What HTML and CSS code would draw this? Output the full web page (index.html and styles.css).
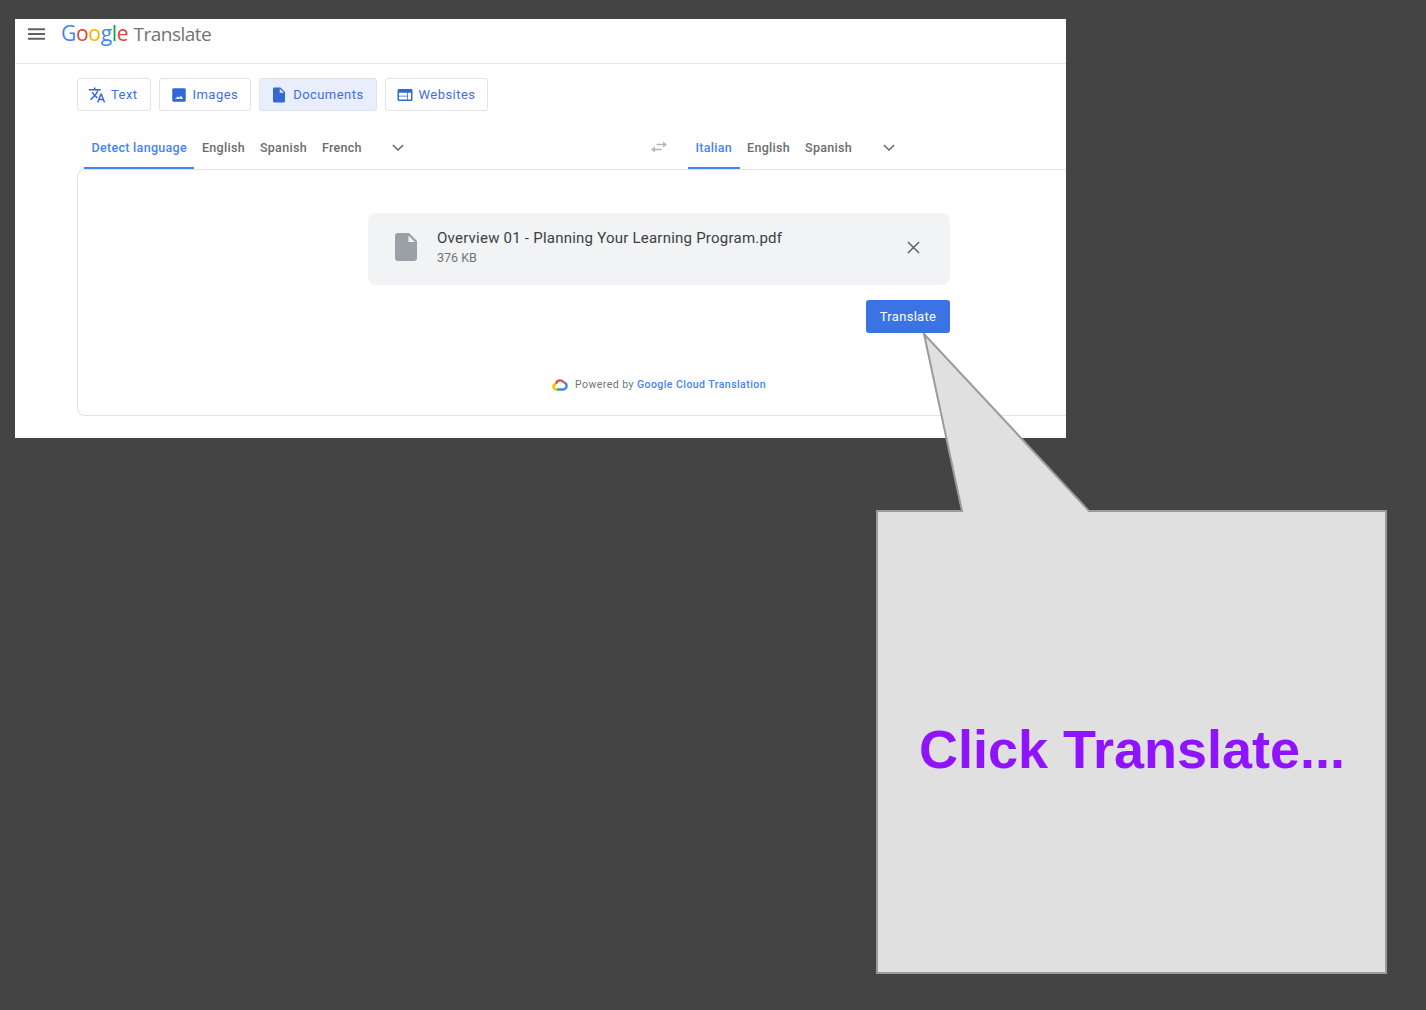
FILE: index.html
```html
<!DOCTYPE html>
<html lang="en">

<head>
    <meta charset="UTF-8">
    <title>Google Translate - Click Translate</title>
    <link rel="stylesheet" href="styles.css">
</head>

<body>
    <div class="panel">
        <div class="topbar">
            <svg class="menu-icon" viewBox="0 0 18 12"><path d="M0 0h18v2H0zM0 5h18v2H0zM0 10h18v2H0z"/></svg>
            <div class="logo">
                <span class="g-blue">G</span><span class="g-red">o</span><span class="g-yellow">o</span><span class="g-blue">g</span><span class="g-green">l</span><span class="g-red">e</span>
                <span class="logo-name">Translate</span>
            </div>
        </div>

        <div class="modes">
            <div class="mode">
                <svg viewBox="0 0 24 24"><path d="M12.87 15.07l-2.54-2.51.03-.03c1.74-1.94 2.98-4.17 3.71-6.53H17V4h-7V2H8v2H1v1.99h11.17C11.5 7.92 10.44 9.75 9 11.35 8.07 10.32 7.3 9.19 6.69 8h-2c.73 1.63 1.73 3.17 2.98 4.56l-5.09 5.02L4 19l5-5 3.11 3.11.76-2.04zM18.5 10h-2L12 22h2l1.12-3h4.75L21 22h2l-4.5-12zm-2.62 7l1.62-4.33L19.12 17h-3.24z"/></svg>
                Text
            </div>
            <div class="mode">
                <svg viewBox="0 0 24 24"><path fill-rule="evenodd" d="M5 3h14c1.100 0 2 .9 2 2v14c0 1.100-.9 2-2 2H5c-1.100 0-2-.9-2-2V5c0-1.100.9-2 2-2zM6.500 17h11l-3-4-2.200 2.600-1.600-1.500z"/></svg>
                Images
            </div>
            <div class="mode mode-on">
                <svg viewBox="0 0 24 24"><path d="M6 2c-1.100 0-1.990.9-1.990 2L4 20c0 1.100.89 2 1.990 2H18c1.100 0 2-.9 2-2V8l-6-6H6zm7 7V3.500L18.500 9H13z"/></svg>
                Documents
            </div>
            <div class="mode">
                <svg viewBox="0 0 24 24"><path d="M20 4H4c-1.100 0-1.990.9-1.990 2L2 18c0 1.100.9 2 2 2h16c1.100 0 2-.9 2-2V6c0-1.100-.9-2-2-2zm-5 14H4v-4h11v4zm0-5H4V9h11v4zm5 5h-4V9h4v9z"/></svg>
                Websites
            </div>
        </div>

        <div class="langs">
            <div class="lang-side lang-source">
                <div class="lang lang-on">Detect language</div>
                <div class="lang">English</div>
                <div class="lang">Spanish</div>
                <div class="lang">French</div>
                <svg class="chevron" viewBox="0 0 14 8"><path d="M1 1l6 6 6-6"/></svg>
            </div>
            <svg class="swap" viewBox="0 0 18 12"><path d="M5 5.500L1 8.500l4 3V9.300h6.500V7.700H5zM13 .5v2.200H6.500v1.600H13v2.200l4-3z"/></svg>
            <div class="lang-side">
                <div class="lang lang-on">Italian</div>
                <div class="lang">English</div>
                <div class="lang">Spanish</div>
                <svg class="chevron" viewBox="0 0 14 8"><path d="M1 1l6 6 6-6"/></svg>
            </div>
        </div>

        <div class="box">
            <div class="column">
                <div class="file">
                    <svg class="file-icon" viewBox="0 0 22 28"><path d="M3 0h11l8 8v17c0 1.700-1.300 3-3 3H3c-1.700 0-3-1.300-3-3V3c0-1.700 1.300-3 3-3zm10.500 2.500V9h6.500z" fill-rule="evenodd"/></svg>
                    <div class="file-text">
                        <div class="file-name">Overview 01 - Planning Your Learning Program.pdf</div>
                        <div class="file-size">376 KB</div>
                    </div>
                    <svg class="close" viewBox="0 0 14 14"><path d="M1 1l12 12M13 1L1 13"/></svg>
                </div>
                <div class="actions">
                    <div class="translate">Translate</div>
                </div>
                <div class="powered">
                    <svg class="cloud" viewBox="0 0 16 12">
                        <path class="c-red" d="M4 5.200C4.300 2.900 6 1.400 8 1.400c1.500 0 2.800.8 3.500 2"/>
                        <path class="c-blue" d="M11.500 3.400c1.800.2 3.100 1.800 3.100 3.500 0 2-1.500 3.600-3.600 3.600H8"/>
                        <path class="c-green" d="M8 10.500H4.500"/>
                        <path class="c-yellow" d="M4.500 10.500C2.700 10.500 1.400 9.200 1.400 7.700 1.400 6.300 2.500 5.200 4 5.200"/>
                    </svg>
                    <span>Powered by</span> <span class="powered-link">Google Cloud Translation</span>
                </div>
            </div>
        </div>
    </div>

    <div class="callout">
        <svg class="callout-shape" viewBox="0 0 512 642"><path d="M48 1L213 178H510V640H1V178H86z"/></svg>
        <div class="callout-text">Click Translate...</div>
    </div>
</body>

</html>
```

FILE: styles.css
```css
body {
    margin: 0;
    height: 1010px;
    overflow: hidden;
    background-color: #444444;
    font-family: Roboto, "Liberation Sans", sans-serif;
    padding: 19px 0 0 15px;
    box-sizing: border-box;
}

.panel {
    width: 1050.5px;
    height: 419px;
    background-color: white;
    overflow: hidden;
}

.topbar {
    display: flex;
    align-items: center;
    height: 45px;
    border-bottom: 1px solid #e6e7e8;
    padding: 0 0 15px 13px;
    box-sizing: border-box;
}

.menu-icon {
    width: 17px;
    height: 12px;
    fill: #5f6368;
    margin-right: 16px;
}

.logo {
    font-family: "Open Sans", sans-serif;
    font-size: 21px;
    font-weight: 500;
    letter-spacing: -0.3px;
    line-height: 30px;
}

.logo-name {
    color: #6f7377;
    font-size: 19px;
    font-weight: 400;
    letter-spacing: -0.5px;
}

.g-blue { color: #4285f4; }
.g-red { color: #db4437; }
.g-yellow { color: #f4b400; }
.g-green { color: #0f9d58; }

.modes {
    display: flex;
    gap: 8px;
    padding: 14px 0 0 62px;
}

.mode {
    display: flex;
    align-items: center;
    height: 33px;
    box-sizing: border-box;
    padding: 0 12px 0 10px;
    gap: 5px;
    border: 1px solid #e1e3e6;
    border-radius: 3px;
    color: #3f70d9;
    font-size: 13px;
    font-weight: 400;
    letter-spacing: 0.45px;
}

.mode svg {
    width: 18px;
    height: 18px;
    fill: #3367d6;
}

.mode-on {
    background-color: #e8eefb;
}

.langs {
    display: flex;
    align-items: center;
    height: 39px;
    margin-top: 19px;
}

.lang-side {
    display: flex;
    align-items: center;
    height: 100%;
}

.lang-source {
    padding-left: 69px;
    box-sizing: border-box;
    flex: 0 0 620px;
}

.lang {
    display: flex;
    align-items: center;
    height: 100%;
    box-sizing: border-box;
    padding: 0 7.5px 5px;
    color: #696d71;
    font-size: 12.5px;
    font-weight: 500;
    letter-spacing: 0.3px;
}

.lang-on {
    color: #4285f4;
    border-bottom: 2px solid #4285f4;
    padding-bottom: 3px;
}

.chevron {
    width: 12px;
    height: 7px;
    margin: 0 0 5px 23px;
    fill: none;
    stroke: #5f6368;
    stroke-width: 1.6;
}

.swap {
    width: 18px;
    height: 12px;
    margin: 0 20px 5px 15px;
    fill: #b4b6b9;
}

.box {
    margin-left: 62px;
    height: 247px;
    box-sizing: border-box;
    border: 1px solid #e3e4e6;
    border-right: 0;
    border-radius: 8px 0 0 8px;
    padding: 43px 0 0 290px;
}

.column {
    width: 582px;
}

.file {
    display: flex;
    align-items: center;
    height: 72px;
    background-color: #f1f3f4;
    border-radius: 8px;
    padding: 0 30px 0 27px;
    box-sizing: border-box;
}

.file-icon {
    width: 22px;
    height: 28px;
    fill: #9aa0a6;
    margin: 0 20px 5px 0;
}

.file-text {
    flex: 1;
    padding-bottom: 3px;
}

.file-name {
    color: #3c4043;
    font-size: 15px;
    letter-spacing: 0.23px;
    line-height: 20px;
}

.file-size {
    color: #70757a;
    font-size: 12.5px;
    line-height: 18px;
    margin-top: 1px;
}

.close {
    width: 13px;
    height: 13px;
    fill: none;
    stroke: #5f6368;
    stroke-width: 1.6;
    margin-bottom: 4px;
}

.actions {
    display: flex;
    justify-content: flex-end;
    margin-top: 15px;
}

.translate {
    display: flex;
    align-items: center;
    justify-content: center;
    width: 84px;
    height: 33px;
    background-color: #3b73e4;
    border-radius: 3px;
    color: white;
    font-size: 13px;
    letter-spacing: 0.3px;
}

.powered {
    display: flex;
    align-items: center;
    justify-content: center;
    gap: 3px;
    margin-top: 45px;
    color: #70757a;
    font-size: 10.5px;
    letter-spacing: 0.45px;
}

.powered-link {
    color: #4285f4;
    font-weight: 500;
}

.cloud {
    width: 16px;
    height: 12px;
    margin-right: 4px;
    fill: none;
    stroke-width: 2.4;
}

.c-red { stroke: #ea4335; }
.c-blue { stroke: #4285f4; }
.c-green { stroke: #34a853; }
.c-yellow { stroke: #fbbc05; }

.callout {
    position: absolute;
    left: 876px;
    top: 333px;
    width: 512px;
    height: 642px;
}

.callout-shape {
    position: absolute;
    left: 0;
    top: 0;
    width: 512px;
    height: 642px;
    fill: #e0e0e0;
    stroke: #9b9b9b;
    stroke-width: 2;
}

.callout-text {
    position: absolute;
    left: 0;
    right: 0;
    top: 384px;
    text-align: center;
    color: #9013fe;
    font-family: "Liberation Sans", Arial, sans-serif;
    font-size: 54px;
    font-weight: bold;
    line-height: 64px;
    white-space: nowrap;
}
```
